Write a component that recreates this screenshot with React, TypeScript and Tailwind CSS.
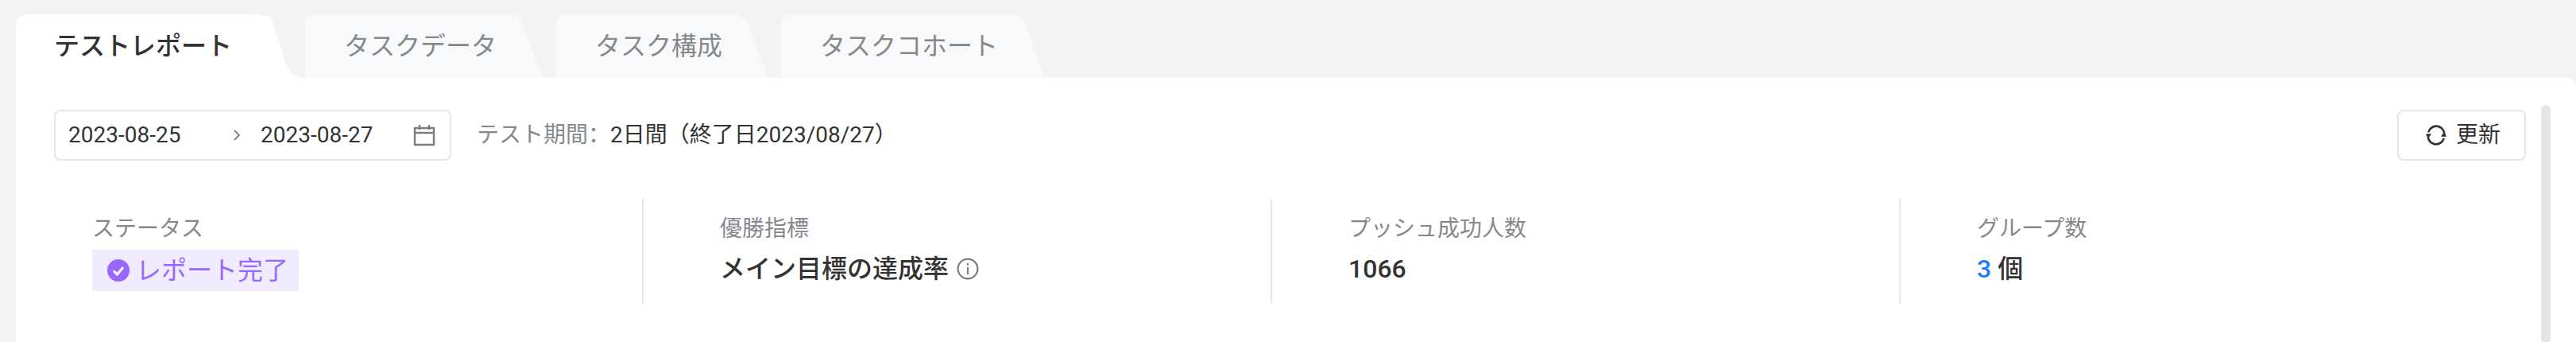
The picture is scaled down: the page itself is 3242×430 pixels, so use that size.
import React from "react";

const font = "font-['Roboto','Noto_Sans_CJK_SC',sans-serif]";

const tabs = [
  { label: "タスクデータ", width: "w-[300px]", path: "M0 80V12Q0 0 14 0H250C266 0 272 5 274 14L300 80Z" },
  { label: "タスク構成", width: "w-[267px]", path: "M0 80V12Q0 0 14 0H218C233 0 239 5 242 14L267 80Z" },
  { label: "タスクコホート", width: "w-[331px]", path: "M0 80V12Q0 0 14 0H283C298 0 305 5 308 14L331 80Z" },
];

function ActiveTab() {
  return (
    <div className="relative flex h-20 w-[364px] items-center pl-[48px]">
      <svg className="absolute left-0 top-0" width="364" height="80" viewBox="0 0 364 80">
        <path d="M0 80V14Q0 0 16 0H293C312 0 321 2 323 8L339 60C345 74 352 80 364 80Z" fill="#ffffff" />
      </svg>
      <span className="relative text-[32px] font-medium text-[#333333]">テストレポート</span>
    </div>
  );
}

function CalendarIcon() {
  return (
    <svg width="28" height="28" viewBox="0 0 28 28" fill="none" stroke="#7a7c80" strokeWidth="2.4">
      <path d="M2 5H26V26H2Z" />
      <path d="M2 11H26" />
      <path d="M8 1V7M20 1V7" />
    </svg>
  );
}

function RefreshIcon() {
  return (
    <svg width="26" height="26" viewBox="0 0 28 28" fill="none">
      <path d="M3.5 10A11 11 0 0 1 25 11" stroke="#333333" strokeWidth="2.8" />
      <path d="M24.5 18A11 11 0 0 1 3 17" stroke="#333333" strokeWidth="2.8" />
      <path d="M0 12H7.5L3 19Z" fill="#333333" />
      <path d="M20.5 16H28L25 9Z" fill="#333333" />
    </svg>
  );
}

function InfoIcon() {
  return (
    <svg width="28" height="28" viewBox="0 0 28 28" fill="none" stroke="#7a7c80" strokeWidth="2.2">
      <circle cx="14" cy="14" r="12.4" />
      <path d="M14 12V21" />
      <path d="M14 7V9.5" />
    </svg>
  );
}

function CheckIcon() {
  return (
    <svg width="28" height="28" viewBox="0 0 28 28" fill="none">
      <circle cx="14" cy="14" r="14" fill="#9966ff" />
      <path d="M8 14.5L12.5 19L20 10" stroke="#ffffff" strokeWidth="3" />
    </svg>
  );
}

function Stat({ label, first, children }: { label: string; first?: boolean; children: React.ReactNode }) {
  return (
    <div className={first ? "pl-[96px] pt-[18px]" : "border-l-2 border-[#e5e6eb] pl-[96px] pt-[18px]"}>
      <div className="h-10 text-[28px] leading-10 text-[#86888c]">{label}</div>
      <div className={first ? "mt-[6px] flex h-[52px] items-center" : "mt-[6px] flex h-[52px] items-center pb-1"}>
        {children}
      </div>
    </div>
  );
}

export default function App() {
  return (
    <div className={`${font} h-[430px] w-[3242px] overflow-hidden bg-[#f2f3f5] pt-[18px]`}>
      <div className="flex pl-5">
        <ActiveTab />
        <div className="flex gap-4">
          {tabs.map((tab) => (
            <div key={tab.label} className={`relative flex h-20 items-center pl-[49px] ${tab.width}`}>
              <svg className="absolute left-0 top-0 h-20 w-full">
                <path d={tab.path} fill="#f8f9fb" />
              </svg>
              <span className="relative text-[32px] text-[#86888c]">{tab.label}</span>
            </div>
          ))}
        </div>
      </div>

      <div className="relative ml-5 h-[332px] rounded-tr-xl bg-white pt-10">
        <div className="flex items-center pl-12 pr-[63px]">
          <div className="flex h-[64px] w-[500px] items-center rounded-lg border-2 border-[#e5e6eb] pl-4 pr-[18px] text-[28px] text-[#333333]">
            <span className="w-[208px]">2023-08-25</span>
            <svg width="8" height="14" viewBox="0 0 8 14" fill="none" stroke="#7a7c80" strokeWidth="1.8">
              <path d="M1 1L7 7L1 13" />
            </svg>
            <span className="ml-[26px]">2023-08-27</span>
            <span className="ml-auto flex">
              <CalendarIcon />
            </span>
          </div>
          <div className="ml-8 text-[28px] text-[#333333]">
            <span className="text-[#86888c]">テスト期間：</span>
            2日間（終了日2023/08/27）
          </div>
          <button className="ml-auto flex h-[64px] w-[162px] items-center gap-3 rounded-lg border-2 border-[#e5e6eb] pl-[34px] text-[28px] text-[#333333]">
            <RefreshIcon />
            更新
          </button>
        </div>

        <div className="mt-[48px] grid h-[132px] grid-cols-[788px_791px_791px_791px]">
          <Stat label="ステータス" first>
            <div className="flex h-[52px] w-[260px] items-center gap-2 bg-[#f0ebff] pl-[19px] text-[32px] text-[#9966ff]">
              <CheckIcon />
              レポート完了
            </div>
          </Stat>
          <Stat label="優勝指標">
            <span className="text-[32px] font-medium text-[#333333]">メイン目標の達成率</span>
            <span className="ml-[10px] flex">
              <InfoIcon />
            </span>
          </Stat>
          <Stat label="プッシュ成功人数">
            <span className="text-[32px] font-medium text-[#333333]">1066</span>
          </Stat>
          <Stat label="グループ数">
            <span className="text-[32px] font-medium text-[#1f7bff]">3</span>
            <span className="ml-2 text-[32px] font-medium text-[#333333]">個</span>
          </Stat>
        </div>

        <div className="absolute left-[3178px] top-[34px] h-[300px] w-3 rounded-full bg-[#e5e5e5]" />
      </div>
    </div>
  );
}
